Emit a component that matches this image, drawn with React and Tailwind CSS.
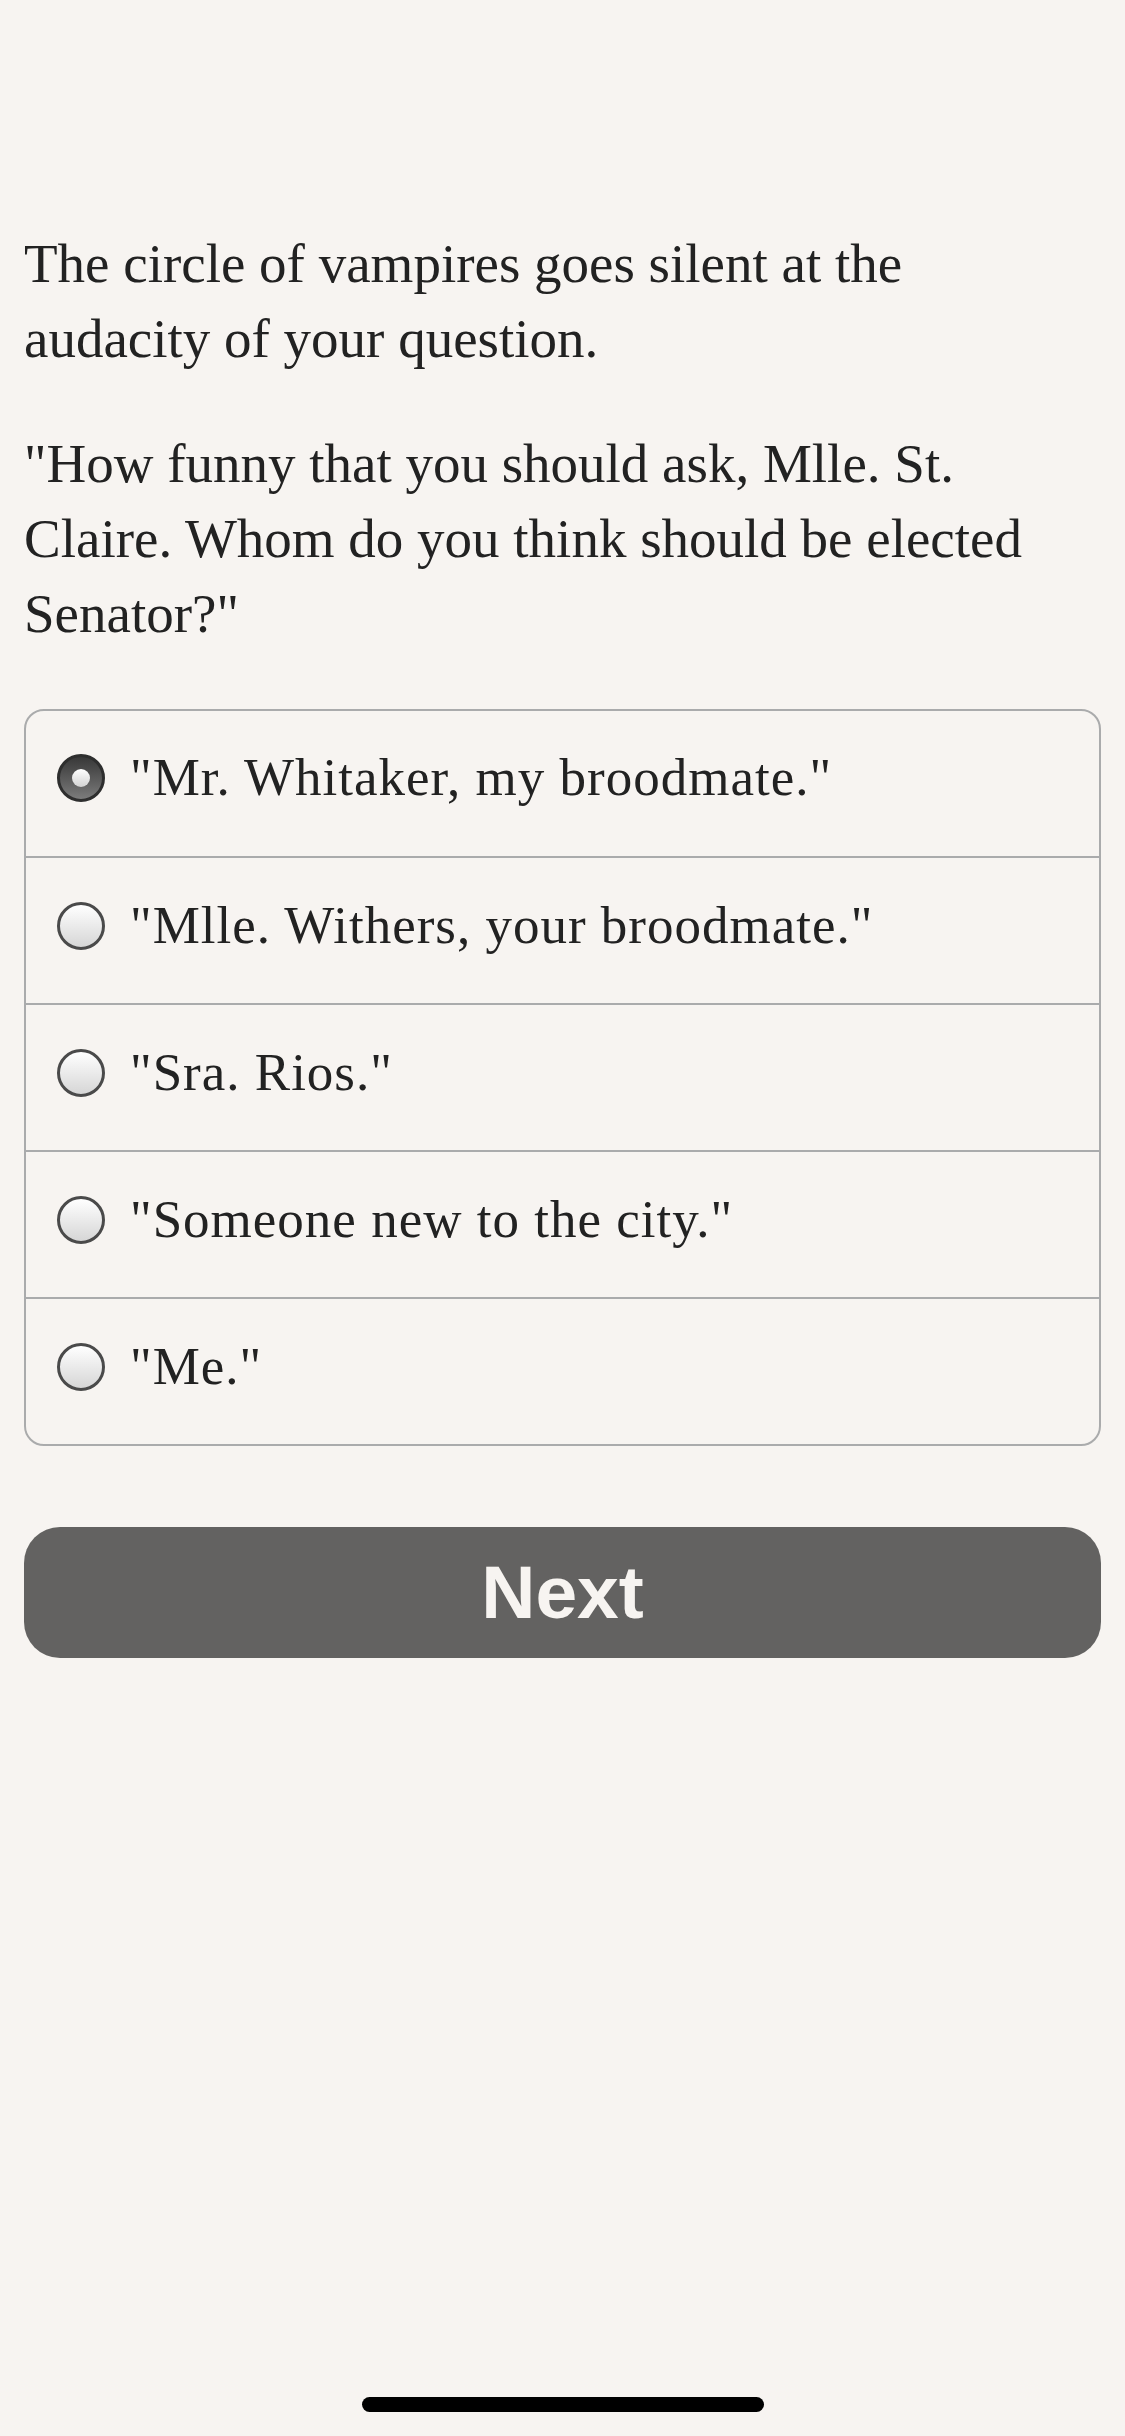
import React from "react";

const options = [
  '"Mr. Whitaker, my broodmate."',
  '"Mlle. Withers, your broodmate."',
  '"Sra. Rios."',
  '"Someone new to the city."',
  '"Me."',
];

function Radio({ checked }) {
  if (checked) {
    return (
      <span className="flex h-[48px] w-[48px] shrink-0 items-center justify-center rounded-full border-[3px] border-[#2e2e2e] bg-gradient-to-b from-[#383838] to-[#7c7c7c]">
        <span className="h-[18px] w-[18px] rounded-full bg-gradient-to-b from-[#ffffff] to-[#d2d2d2]" />
      </span>
    );
  }
  return (
    <span className="h-[48px] w-[48px] shrink-0 rounded-full border-[3px] border-[#4a4a4a] bg-gradient-to-b from-[#ffffff] to-[#d6d6d6]" />
  );
}

export default function App() {
  return (
    <div
      className="relative min-h-[2436px] w-full bg-[#f7f4f1] text-[#222222]"
      style={{ fontFamily: '"Liberation Serif", serif' }}
    >
      <div className="px-[24px] pt-[226px]">
        <div className="pr-[44px]">
          <p className="text-[55px] leading-[75px]">
            The circle of vampires goes silent at the audacity of your question.
          </p>
          <p className="mt-[50px] text-[55px] leading-[75px]">
            "How funny that you should ask, Mlle. St. Claire. Whom do you think should be elected Senator?"
          </p>
        </div>

        <div className="mt-[58px] overflow-hidden rounded-[20px] border-2 border-[#aaabac]">
          {options.map((o, i) => (
            <div
              key={i}
              className={
                "flex items-center gap-[25px] pl-[31px] pb-[12px] " +
                (i > 0 ? "h-[147px] border-t-2 border-[#aaabac] pt-[2px]" : "h-[145px]")
              }
            >
              <Radio checked={i === 0} />
              <span className="text-[53px] leading-none tracking-[1px]">{o}</span>
            </div>
          ))}
        </div>

        <button
          className="mt-[81px] flex h-[131px] w-full items-center justify-center rounded-[36px] bg-[#636261] text-[75px] font-bold text-[#f7f4f1]"
          style={{ fontFamily: '"Liberation Sans", Arial, sans-serif' }}
        >
          Next
        </button>
      </div>

      <div className="absolute bottom-[24px] left-1/2 h-[15px] w-[402px] -translate-x-1/2 rounded-full bg-black" />
    </div>
  );
}
